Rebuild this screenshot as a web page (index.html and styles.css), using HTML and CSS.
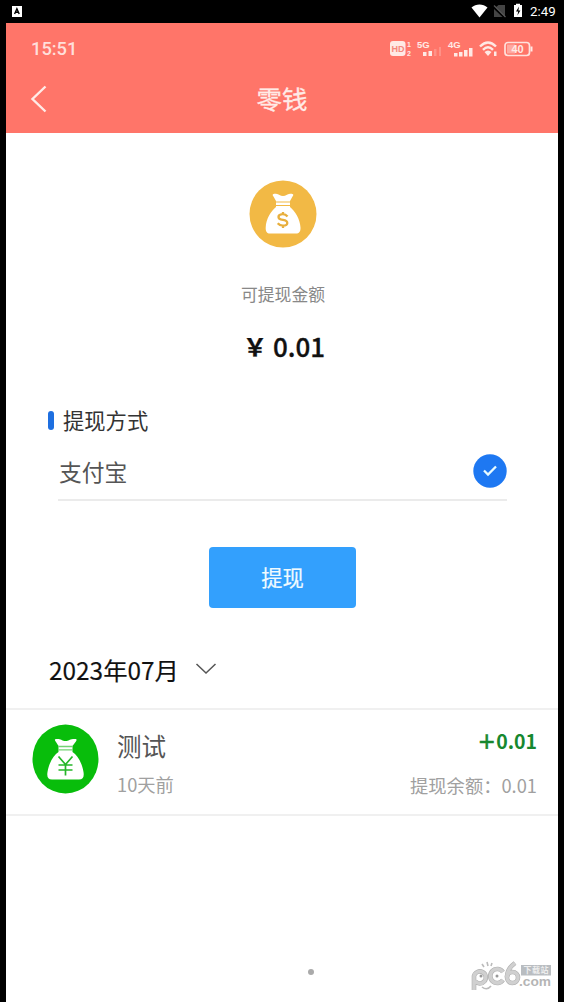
FILE: index.html
```html
<!DOCTYPE html>
<html lang="zh-CN">
<head>
<meta charset="utf-8">
<title>零钱</title>
<link rel="stylesheet" href="styles.css">
</head>
<body>
<div class="system-bar">
  <svg class="app-icon" width="10" height="11" viewBox="0 0 10 11"><rect width="10" height="11" fill="#fff"/><path d="M2.600 8 4.900 2.800 7.200 8M3.500 6.300h2.900" fill="none" stroke="#000" stroke-width="1.400"/></svg>
  <svg class="system-icons" width="56" height="16" viewBox="0 0 56 16">
    <path d="M.5 4.500C5 .5 12 .5 16.500 4.500L8.500 14.500Z" fill="#fff"/>
    <path d="M27.500 2H34v12L24.500 4.500ZM23 6 31.500 14H23Z" fill="#444"/>
    <path d="M23 2.500 34.500 14" stroke="#555" stroke-width="1.200"/>
    <path d="M43 2h2V.7h4V2h2v12h-8Z" fill="#fff"/><path d="M48 3.500 45 8.500h2.200l-.8 4 3-5h-2Z" fill="#000"/>
  </svg>
  <span class="system-time">2:49</span>
</div>
<main class="screen">
  <header class="header">
    <div class="phone-status">
      <span class="phone-time">15:51</span>
      <svg width="145" height="20" viewBox="0 0 145 20" fill="#ffe9e5">
        <rect x="1" y="2" width="15.500" height="15" rx="3"/>
        <text class="hd" x="2.500" y="13">HD</text>
        <text class="tiny" x="18" y="8">1</text><text class="tiny" x="18" y="17">2</text>
        <text class="network" x="28" y="9">5G</text>
        <path d="M34 13h3.500v4H34ZM39.500 12H43v5h-3.500Z"/><path d="M45 10h2.500v7H45ZM50 8h2v9h-2Z" opacity=".25"/>
        <text class="network" x="59" y="9">4G</text>
        <path d="M65 14h3.500v3.500H65ZM70 13h3.500v4.500H70ZM75 11h3.500v6.500H75ZM80 9h3.500v8.500H80Z"/>
        <path d="M91 7.500q8-8 16 0M94 10.800q5-5 10 0" fill="none" stroke="#ffe9e5" stroke-width="2.400"/><path d="m95.500 13 3.500 4 3.500-4q-3.500-3-7 0Z"/><path d="M105 12.500h2.500v4.500H105Z"/>
        <rect x="116" y="3.500" width="24.500" height="13" rx="3" fill="none" stroke="#ffe1dc" stroke-width="1.700"/>
        <rect x="118" y="5.500" width="8" height="9" opacity=".45"/><path d="M141.500 7.500h2v5h-2Z"/>
        <text class="battery" x="122.500" y="14">40</text>
      </svg>
    </div>
    <div class="title-row">
      <svg class="back" width="18" height="28" viewBox="0 0 18 28"><path d="M16.500 1.500 3.500 14 16.500 26.500" fill="none" stroke="#ffebe7" stroke-width="2.400"/></svg>
      <h1 class="title">零钱</h1>
    </div>
  </header>

  <section class="balance">
    <svg class="coin" width="68" height="68" viewBox="0 0 68 68">
      <circle cx="34" cy="34" r="33.500" fill="#f2b945"/>
      <path d="M24.500 16.500C23 14.500 23.500 13.500 27 13.700 30 14 31 16 34 16S38 14 41 13.700C44.500 13.500 45 14.500 43.500 16.500L41 21V27C46 31 51 39 51.500 47.500 51.700 51.500 50 53.500 47 53.500H21C18 53.500 16.500 51.500 16.700 47.500 17 39 22 31 27 27V21Z" fill="#fff"/>
      <path d="M26 22h16M26 25.500h16" stroke="#f2b945" stroke-width="1.100"/>
      <path d="M38.500 36.500q-2-2.500-5-2.300-4 .3-4 2.700 0 2.300 4.400 3t4.400 3q0 2.500-4.400 2.800-3 0-5.200-2.500M34 32v3M34 45v3" fill="none" stroke="#e8af3d" stroke-width="2.300"/>
    </svg>
    <div class="balance-label">可提现金额</div>
    <div class="balance-value"><span class="currency">￥</span>0.01</div>
  </section>

  <section class="method">
    <h2 class="method-heading">提现方式</h2>
    <div class="method-option">
      <span>支付宝</span>
      <svg width="34" height="34" viewBox="0 0 34 34"><circle cx="17" cy="17" r="16.700" fill="#1e78f2"/><path d="m11 16.500 4 4 8-8" fill="none" stroke="#e8fbff" stroke-width="2.300"/></svg>
    </div>
  </section>
  <button class="withdraw">提现</button>

  <div class="month">
    <span>2023年07月</span>
    <svg width="22" height="14" viewBox="0 0 22 14"><path d="m1.500 2 9.500 9 9.500-9" fill="none" stroke="#555" stroke-width="1.500"/></svg>
  </div>
  <article class="record">
    <svg width="68" height="70" viewBox="0 0 68 70">
      <ellipse cx="33.500" cy="35" rx="33" ry="34.500" fill="#08bd0b"/>
      <path d="M24 18C22 15.500 22.500 14.500 26.500 15 30 15.500 30 17 33.500 17S37 15.500 41 15C45 14.500 45.500 15.500 43.500 18L40.500 22V28C45.500 31 50 39 51.500 48 52.300 53 51 55.500 47 55.500H20C16 55.500 14.700 53 15.500 48 17 39 21.500 31 26.500 28V22Z" fill="#fff"/>
      <path d="M26 22.500h15M26 25.800h15" stroke="#72d373" stroke-width="1.300"/>
      <path d="m26.500 32.500 7 8 7-8M26.500 41h14M26.500 46h14M33.500 40v11.500" fill="none" stroke="#25b629" stroke-width="1.700"/>
    </svg>
    <div class="record-info">
      <div class="record-name">测试</div>
      <div class="record-meta">10天前</div>
    </div>
    <div class="record-amount">
      <div class="gain"><span class="sign">＋</span>0.01</div>
      <div class="record-meta">提现余额：0.01</div>
    </div>
  </article>
  <i class="page-dot"></i>
  <svg class="watermark" width="84" height="32" viewBox="0 0 84 32">
    <g fill="none" stroke="#b0b0b0" stroke-width="4.600">
      <path d="M4 31V17a6 6 0 1 1 1 5"/><path d="M33 13a7 7 0 1 0 0 8"/><path d="M45 4q-8 6-8 14"/><circle cx="42.500" cy="18.500" r="5.500"/>
    </g>
    <g fill="none" stroke="#d0d0d0" stroke-width="3.400">
      <path d="M4 31V17a6 6 0 1 1 1 5"/><path d="M33 13a7 7 0 1 0 0 8"/><path d="M45 4q-8 6-8 14"/><circle cx="42.500" cy="18.500" r="5.500"/>
    </g>
    <path d="m12 5 2 3M17 3l1 4M22 4l-1 3M12 28q5 4 9-1" fill="none" stroke="#bbb" stroke-width="1.600"/>
    <circle cx="11" cy="17" r="1.500" fill="#999"/><circle cx="27" cy="17" r="1.500" fill="#999"/>
    <rect x="51" y="6" width="30" height="10.500" fill="#b9bdc1"/>
    <text class="mark-cn" x="53.500" y="13.500" textLength="25">下载站</text>
    <text class="mark-com" x="49" y="27" textLength="32" lengthAdjust="spacingAndGlyphs">.com</text>
  </svg>
</main>
</body>
</html>
```
FILE: styles.css
```css
* { box-sizing: border-box; }
body {
  margin: 0;
  width: 564px;
  height: 1002px;
  overflow: hidden;
  background: #000;
  font-family: "Noto Sans CJK SC", sans-serif;
}
h1, h2 { margin: 0; font-weight: 400; }
svg { flex: none; display: block; }
.system-bar {
  display: flex;
  align-items: center;
  height: 23px;
  padding: 0 8px 0 12px;
  color: #fff;
}
.system-icons { margin: -1px 0 0 auto; }
.system-time {
  width: 26px;
  margin-left: 3px;
  white-space: nowrap;
  font: 400 13.3px/22px Roboto, sans-serif;
}
.screen {
  position: relative;
  display: flex;
  flex-direction: column;
  width: 552px;
  height: 979px;
  margin: 0 6px;
  background: #fff;
}
.header { height: 110px; background: #ff7569; color: #ffebe7; }
.phone-status {
  display: flex;
  justify-content: space-between;
  align-items: center;
  height: 52px;
  padding: 0 24px 0 25px;
}
.phone-time { font: 500 18.3px/24px Roboto, sans-serif; color: #ffdfda; }
.hd { font: 700 9px "Liberation Sans", sans-serif; fill: #f5877c; }
.tiny { font: 700 7px "Liberation Sans", sans-serif; }
.network { font: 700 9.5px "Liberation Sans", sans-serif; }
.battery { font: 700 11px "Liberation Sans", sans-serif; }
.title-row {
  display: grid;
  grid-template-columns: 1fr auto 1fr;
  align-items: center;
  height: 48px;
  padding: 0 23px;
}
.title { margin-top: -2px; font-size: 25.5px; line-height: 44px; -webkit-text-stroke: .3px; }
.balance {
  display: flex;
  flex-direction: column;
  align-items: center;
  height: 256px;
  padding: 47px 0 0 2px;
}
.balance-label { margin-top: 33px; color: #888; font-size: 16.8px; line-height: 26px; }
.balance-value {
  display: flex;
  margin-top: 19px;
  color: #111;
  font-size: 26px;
  font-weight: 500;
  line-height: 40px;
  -webkit-text-stroke: .3px;
}
.currency { margin: 0 6px 0 2px; font-size: 24px; font-weight: 700; }
.method { padding: 16px 51px 0 42px; }
.method-heading {
  display: flex;
  align-items: center;
  height: 30px;
  color: #333;
  font-size: 21.3px;
  line-height: 30px;
}
.method-heading::before {
  content: "";
  width: 6px;
  height: 19px;
  margin-right: 9px;
  border-radius: 3px;
  background: #1e6fe0;
}
.method-option {
  display: flex;
  justify-content: space-between;
  align-items: center;
  height: 66px;
  margin-left: 10px;
  padding-top: 7px;
  border-bottom: 2px solid #ebebeb;
  color: #555;
  font-size: 22.8px;
  line-height: 34px;
}
.method-option span { margin: 2px 0 0 1px; }
.withdraw {
  align-self: center;
  width: 147px;
  height: 61px;
  margin: 46px 0 0 1px;
  padding: 0 0 2px;
  border: 0;
  border-radius: 4px;
  background: #33a0fd;
  color: #f0faff;
  font: 400 21.3px/59px "Noto Sans CJK SC", sans-serif;
  -webkit-text-stroke: .2px;
}
.month {
  display: flex;
  align-items: center;
  gap: 16px;
  height: 100px;
  padding: 24px 0 0 43px;
  color: #111;
  font-size: 24.4px;
  line-height: 36px;
  -webkit-text-stroke: .15px;
}
.month svg { margin-top: -2px; }
.record {
  display: flex;
  height: 108px;
  padding: 14px 21px 0 26px;
  border: solid #f0f0f0;
  border-width: 2px 0;
}
.record-info { margin: 3px 0 0 17px; }
.record-name { color: #555; font-size: 24.5px; line-height: 38px; }
.record-meta { color: #a0a0a0; font-size: 18.3px; line-height: 28px; margin-top: 5px; }
.record-amount { margin-left: auto; text-align: right; }
.gain {
  display: flex;
  justify-content: flex-end;
  color: #16882f;
  font-size: 19.5px;
  font-weight: 700;
  line-height: 34px;
}
.sign { font-size: 19px; -webkit-text-stroke: .5px; }
.record-amount .record-meta { margin-top: 13px; }
.page-dot {
  width: 6px;
  height: 6px;
  margin: 153px 0 0 302px;
  border-radius: 50%;
  background: #aaa;
}
.watermark { position: absolute; right: 4px; bottom: 11px; }
.mark-cn { font: 700 8px "Noto Sans CJK SC", sans-serif; fill: #eee; }
.mark-com { font: 700 12px "Liberation Sans", sans-serif; fill: #b5b5b5; }
```
